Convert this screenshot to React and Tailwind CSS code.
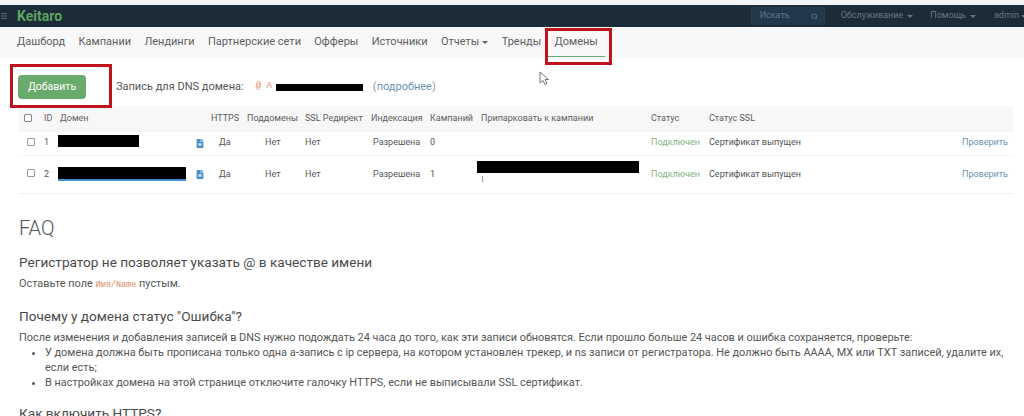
import React from "react";
import { Search, Menu } from "lucide-react";
import { FaFileAlt } from "react-icons/fa";

const navItems = ["Дашборд", "Кампании", "Лендинги", "Партнерские сети", "Офферы", "Источники"];

const rows = [
  { id: 1, domainWidth: "w-[81px]", campaigns: 0, h: "h-6" },
  { id: 2, domainWidth: "w-[128px]", campaigns: 1, h: "h-[38px]", underline: true, parked: true },
];

function Caret({ className }) {
  return <span className={`inline-block w-0 h-0 border-x-[3px] border-x-transparent border-t-[3px] border-t-current ${className}`}></span>;
}

function Redacted({ className }) {
  return <span className={`block bg-black ${className}`}></span>;
}

export default function App() {
  return (
    <div className="relative w-[1024px] h-[416px] overflow-hidden bg-white text-[#555] font-['Roboto',sans-serif]">
      <div className="h-[5px] bg-[#f4f4f4]"></div>

      {/* top bar */}
      <div className="h-[22px] bg-[#1b2b38] flex items-center">
        <Menu className="w-2 h-2 text-[#7c8a94] mr-[9px]" strokeWidth={2} />
        <span className="text-[14px] font-bold text-[#5da35f]">Keitaro</span>
        <div className="ml-auto flex items-center text-[9px] text-[#68777f]">
          <div className="w-[74px] h-[18px] mr-[16px] bg-[#21394a] flex items-center justify-between pl-[9px] pr-[7px]">
            <span>Искать</span>
            <Search className="w-[7px] h-[7px]" strokeWidth={3} />
          </div>
          <span>Обслуживание</span>
          <Caret className="ml-1 mr-[17px]" />
          <span>Помощь</span>
          <Caret className="ml-1 mr-[18px]" />
          <span>admin</span>
          <Caret className="ml-[2px] -mr-[3px]" />
        </div>
      </div>

      {/* nav */}
      <div className="h-[31px] bg-[#f8f8f8] flex items-center pl-[17px] gap-[13.3px] text-[11px] text-[#5f5f5f]">
        {navItems.map((item) => (
          <span key={item}>{item}</span>
        ))}
        <span className="flex items-center">
          Отчеты
          <Caret className="ml-[3px]" />
        </span>
        <span>Тренды</span>
        <span className="relative self-stretch flex items-center">
          Домены
          <span className="absolute -left-[6px] -right-[7px] bottom-[1px] h-px bg-[#6aaa6c]"></span>
        </span>
      </div>

      {/* dns row */}
      <div className="h-[48px] pt-[10px] flex items-center pl-[18px] text-[11px]">
        <button className="w-[68px] h-6 rounded-sm bg-[#6aaa6c] text-white text-[10.5px]">Добавить</button>
        <span className="ml-[30px]">Запись для DNS домена:</span>
        <span className="ml-[12px] text-[9px] text-[#d98c5f] font-['Liberation_Mono',monospace]">@ A</span>
        <Redacted className="ml-[4px] w-[87px] h-[7px]" />
        <span className="ml-[10px] text-[#8a9aa6]">(<span className="text-[#6d94b5]">подробнее</span>)</span>
      </div>

      {/* table */}
      <div className="ml-[19px] w-[994px] border-b border-[#f0f0f0]">
        <table className="w-full table-fixed border-collapse text-[9px] text-left">
          <colgroup>
            <col className="w-[25px]" />
            <col className="w-[16px]" />
            <col className="w-[151px]" />
            <col className="w-[36px]" />
            <col className="w-[58px]" />
            <col className="w-[66px]" />
            <col className="w-[59px]" />
            <col className="w-[51px]" />
            <col className="w-[170px]" />
            <col className="w-[58px]" />
            <col />
          </colgroup>
          <thead>
            <tr className="h-[25px] bg-[#f7f7f7] text-[#606060] font-normal">
              <th className="font-normal pl-[5px]">
                <span className="block w-2 h-2 border border-[#888] rounded-[1px] bg-white"></span>
              </th>
              <th className="font-normal">ID</th>
              <th className="font-normal">Домен</th>
              <th className="font-normal">HTTPS</th>
              <th className="font-normal">Поддомены</th>
              <th className="font-normal">SSL Редирект</th>
              <th className="font-normal">Индексация</th>
              <th className="font-normal">Кампаний</th>
              <th className="font-normal">Припарковать к кампании</th>
              <th className="font-normal">Статус</th>
              <th className="font-normal">Статус SSL</th>
            </tr>
          </thead>
          <tbody>
            {rows.map((row) => (
              <tr key={row.id} className={`${row.h} border-t border-[#f4f4f4]`}>
                <td className="pl-2">
                  <span className="block w-2 h-2 border border-[#999] rounded-[1px] -mt-0.5"></span>
                </td>
                <td>{row.id}</td>
                <td>
                  <div className="flex items-center justify-between pr-[7px] -ml-[2px]">
                    <span className={`block ${row.underline ? "border-b-2 border-[#4a90d0]" : ""}`}>
                      <Redacted className={`${row.domainWidth} ${row.underline ? "h-3" : "h-3 -mt-1"}`} />
                    </span>
                    <FaFileAlt className="w-[8px] h-[9px] text-[#4a8fc8]" />
                  </div>
                </td>
                <td className="pl-2">Да</td>
                <td className="pl-[18px]">Нет</td>
                <td>Нет</td>
                <td className="pl-[2px]">Разрешена</td>
                <td>{row.campaigns}</td>
                <td>
                  {row.parked && (
                    <div className="-ml-[4px] -mt-[6px]">
                      <Redacted className="w-[162px] h-3" />
                      <span className="block ml-[5px] mt-[3px] w-px h-[6px] bg-[#999]"></span>
                    </div>
                  )}
                </td>
                <td className="text-[#7fb583]">Подключен</td>
                <td>
                  <div className="flex justify-between pr-[5px]">
                    <span>Сертификат выпущен</span>
                    <span className="text-[#6d94b5]">Проверить</span>
                  </div>
                </td>
              </tr>
            ))}
          </tbody>
        </table>
      </div>

      {/* faq */}
      <div className="pl-[19px] pr-[15px] text-[10.9px] leading-[15px]">
        <h1 className="mt-[23px] text-[20px] leading-[22px] font-light">FAQ</h1>
        <h2 className="mt-[14px] text-[13.6px] leading-[18px] text-[#4a4a4a]">Регистратор не позволяет указать @ в качестве имени</h2>
        <p className="mt-[5px]">
          Оставьте поле <code className="text-[8.5px] text-[#d98c5f] font-['Liberation_Mono',monospace]">Имя/Name</code> пустым.
        </p>
        <h2 className="mt-[14px] text-[13.6px] leading-[18px] text-[#4a4a4a]">Почему у домена статус "Ошибка"?</h2>
        <p className="mt-[5px]">
          После изменения и добавления записей в DNS нужно подождать 24 часа до того, как эти записи обновятся. Если прошло больше 24 часов и ошибка сохраняется, проверьте:
        </p>
        <ul className="list-disc pl-[26px]">
          <li>У домена должна быть прописана только одна a-запись с ip сервера, на котором установлен трекер, и ns записи от регистратора. Не должно быть AAAA, MX или TXT записей, удалите их, если есть;</li>
          <li>В настройках домена на этой странице отключите галочку HTTPS, если не выписывали SSL сертификат.</li>
        </ul>
        <h2 className="mt-[14px] text-[13.6px] leading-[18px] text-[#4a4a4a]">Как включить HTTPS?</h2>
      </div>

      {/* red annotation boxes */}
      <div className="absolute left-[10px] top-[64px] w-[102px] h-[44px] border-[3px] border-[#c0141c]"></div>
      <div className="absolute left-[545px] top-[28px] w-[67px] h-[37px] border-[3px] border-[#c0141c]"></div>

      {/* mouse cursor */}
      <svg className="absolute left-[539px] top-[71px]" width="10" height="15" viewBox="0 0 10 15">
        <path d="M1 1v11l3-2.5 2 4 2-1-2-4h3.5z" fill="#fff" stroke="#555" strokeWidth="0.8" />
      </svg>
    </div>
  );
}
